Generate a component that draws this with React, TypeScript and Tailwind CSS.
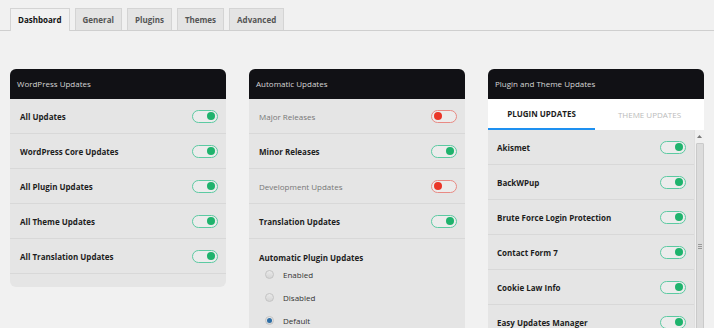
import React from 'react';

type Row = { label: string; on: boolean; muted?: boolean };

const Toggle: React.FC<{ on: boolean }> = ({ on }) => (
  <div
    className={`w-[26px] h-[13px] rounded-full border flex items-center px-[2px] bg-[#ececec] ${
      on ? 'border-[#5ccaa2] justify-end' : 'border-[#e98a84] justify-start'
    }`}
  >
    <div className={`w-[8px] h-[8px] rounded-full ${on ? 'bg-[#1fb36d]' : 'bg-[#ea3527]'}`} />
  </div>
);

const SettingRow: React.FC<Row> = ({ label, on, muted }) => (
  <div className="h-[35px] flex items-center justify-between pl-[10px] pr-[8px] border-b border-[#d8d8d8]">
    <span className={`pt-px ${muted ? 'text-[#777] font-normal' : 'text-[#1d1d1d] font-bold'}`}>{label}</span>
    <Toggle on={on} />
  </div>
);

const PanelHeader: React.FC<{ title: string }> = ({ title }) => (
  <div className="h-[30px] bg-[#111115] rounded-t-[6px] flex items-center pl-[7px] text-[#d6d6d6]">{title}</div>
);

const Radio: React.FC<{ label: string; checked?: boolean }> = ({ label, checked }) => (
  <div className="h-[23px] flex items-center pl-[16px]">
    <div className="w-[9px] h-[9px] rounded-full border border-[#c4c4c4] bg-gradient-to-b from-[#e9e9e9] to-[#d5d5d5] flex items-center justify-center">
      {checked && <div className="w-[5px] h-[5px] rounded-full bg-[#2d6ea6]" />}
    </div>
    <span className="ml-[9px] text-[#333]">{label}</span>
  </div>
);

export default function App() {
  const tabs = ['Dashboard', 'General', 'Plugins', 'Themes', 'Advanced'];
  const wp: Row[] = [
    { label: 'All Updates', on: true },
    { label: 'WordPress Core Updates', on: true },
    { label: 'All Plugin Updates', on: true },
    { label: 'All Theme Updates', on: true },
    { label: 'All Translation Updates', on: true },
  ];
  const auto: Row[] = [
    { label: 'Major Releases', on: false, muted: true },
    { label: 'Minor Releases', on: true },
    { label: 'Development Updates', on: false, muted: true },
    { label: 'Translation Updates', on: true },
  ];
  const plugins = [
    'Akismet',
    'BackWPup',
    'Brute Force Login Protection',
    'Contact Form 7',
    'Cookie Law Info',
    'Easy Updates Manager',
  ];

  return (
    <div className="h-screen overflow-hidden bg-[#f1f1f1] font-['Open_Sans',sans-serif] text-[8px]">
      <div className="flex gap-[5px] px-[10px] pt-[8px] border-b border-[#cfcfcf]">
        {tabs.map((t, i) => (
          <div
            key={t}
            className={`h-[22px] px-[7px] flex items-center font-bold border border-b-0 border-[#d4d4d4] -mb-px ${
              i === 0 ? 'bg-[#f1f1f1] text-[#111] h-[23px]' : 'bg-[#e4e4e4] text-[#555]'
            }`}
          >
            {t}
          </div>
        ))}
      </div>

      <div className="flex items-start gap-[23px] px-[10px] mt-[38px]">
        <div className="w-[216px] rounded-[6px] bg-[#e5e5e5] pb-[13px]">
          <PanelHeader title="WordPress Updates" />
          {wp.map((r) => (
            <SettingRow key={r.label} {...r} />
          ))}
        </div>

        <div className="w-[216px] rounded-t-[6px] bg-[#e5e5e5] h-[260px]">
          <PanelHeader title="Automatic Updates" />
          {auto.map((r) => (
            <SettingRow key={r.label} {...r} />
          ))}
          <div className="pl-[10px] pt-[13px] leading-[11px] font-bold text-[#1d1d1d]">Automatic Plugin Updates</div>
          <div>
            <Radio label="Enabled" />
            <Radio label="Disabled" />
            <Radio label="Default" checked />
          </div>
        </div>

        <div className="w-[216px] rounded-t-[6px] bg-[#e5e5e5] h-[260px] flex flex-col">
          <PanelHeader title="Plugin and Theme Updates" />
          <div className="h-[31px] bg-white flex">
            <div className="w-[107px] flex items-center justify-center font-bold text-[#1d1d1d] border-b-2 border-[#1e90f0]">
              PLUGIN UPDATES
            </div>
            <div className="flex-1 flex items-center justify-center text-[#bbb]">THEME UPDATES</div>
          </div>
          <div className="flex flex-1 min-h-0">
            <div className="flex-1">
              {plugins.map((p) => (
                <div key={p} className="h-[35px] flex items-center justify-between pl-[9px] pr-[8px] border-b border-[#d8d8d8]">
                  <span className="pt-px font-bold text-[#1d1d1d]">{p}</span>
                  <Toggle on />
                </div>
              ))}
            </div>
            <div className="w-[10px] bg-[#f0f0f0] border-l border-[#e0e0e0] flex flex-col items-center">
              <div className="h-[12px] flex items-center justify-center">
                <svg width="5" height="3" viewBox="0 0 5 3">
                  <path d="M0 3 L2.5 0 L5 3 Z" fill="#777" />
                </svg>
              </div>
              <div className="w-[8px] flex-1 mt-[1px] rounded-[1px] bg-[#dcdcdc] border border-[#cacaca] flex items-center justify-center">
                <div className="flex flex-col gap-[1px] mt-[20px]">
                  <div className="w-[4px] h-px bg-[#999]" />
                  <div className="w-[4px] h-px bg-[#999]" />
                  <div className="w-[4px] h-px bg-[#999]" />
                </div>
              </div>
            </div>
          </div>
        </div>
      </div>
    </div>
  );
}
